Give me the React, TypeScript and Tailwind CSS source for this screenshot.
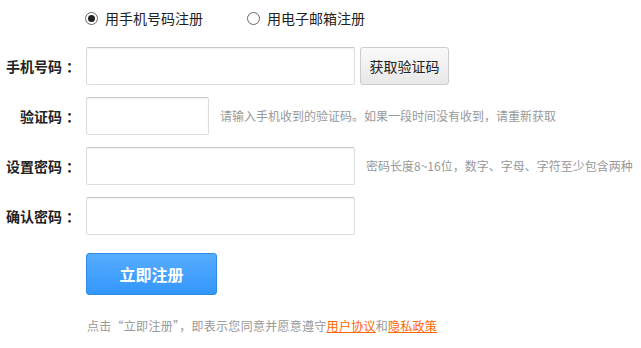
import React, { useState } from 'react';

const font = { fontFamily: '"Noto Sans CJK SC", "Noto Sans", sans-serif' };

function Radio({ checked, label, onClick }: { checked: boolean; label: string; onClick: () => void }) {
    return (
        <button type="button" onClick={onClick} className="flex items-center gap-[7px] text-[14px] text-[#222] leading-none">
            <span className="w-[13px] h-[13px] rounded-full border border-[#666] bg-white flex items-center justify-center">
                {checked && <span className="w-[7px] h-[7px] rounded-full bg-[#222]" />}
            </span>
            <span>{label}</span>
        </button>
    );
}

function Row({ label, children }: { label: string; children: React.ReactNode }) {
    return (
        <div className="flex items-center h-[38px]">
            <label className="w-[80px] text-right text-[14px] font-bold text-[#222] whitespace-nowrap">
                {label}<span className="ml-[4px]">：</span>
            </label>
            <div className="ml-[6px] flex items-center">{children}</div>
        </div>
    );
}

const inputCls = 'h-[38px] border border-[#ddd] border-t-[#c8c8c8] rounded-[2px] bg-white shadow-[inset_0_1px_2px_rgba(0,0,0,0.06)] outline-none px-2 text-[14px]';

export default function App() {
    const [mode, setMode] = useState('phone');

    return (
        <div className="w-[641px] h-[348px] bg-white pt-[8px]" style={font}>
            <div className="flex items-center h-[20px] pl-[85px] gap-[44px]">
                <Radio checked={mode === 'phone'} label="用手机号码注册" onClick={() => setMode('phone')} />
                <Radio checked={mode === 'email'} label="用电子邮箱注册" onClick={() => setMode('email')} />
            </div>

            <div className="mt-[19px] flex flex-col gap-[12px]">
                <Row label="手机号码">
                    <input className={`${inputCls} w-[269px]`} />
                    <button type="button" className="ml-[5px] w-[89px] h-[38px] border border-[#ccc] rounded-[3px] bg-gradient-to-b from-[#fafafa] to-[#e8e8e8] text-[14px] text-[#222]">
                        获取验证码
                    </button>
                </Row>
                <Row label="验证码">
                    <input className={`${inputCls} w-[123px]`} />
                    <span className="ml-[11px] text-[12px] text-[#999] whitespace-nowrap">请输入手机收到的验证码。如果一段时间没有收到，请重新获取</span>
                </Row>
                <Row label="设置密码">
                    <input type="password" className={`${inputCls} w-[269px]`} />
                    <span className="ml-[11px] text-[12px] text-[#999] whitespace-nowrap">密码长度8~16位，数字、字母、字符至少包含两种</span>
                </Row>
                <Row label="确认密码">
                    <input type="password" className={`${inputCls} w-[269px]`} />
                </Row>
            </div>

            <div className="pl-[87px] mt-[18px]">
                <button type="button" className="-ml-px w-[131px] h-[42px] rounded-[3px] border border-[#2e8be8] bg-gradient-to-b from-[#56acff] to-[#3297fb] text-white text-[16px] font-bold">
                    立即注册
                </button>
                <p className="mt-[25px] text-[12px] text-[#999] leading-none whitespace-nowrap tracking-[0.28px]">
                    点击“立即注册”，即表示您同意并愿意遵守<a className="text-[#ff6600] underline">用户协议</a>和<a className="text-[#ff6600] underline">隐私政策</a>
                </p>
            </div>
        </div>
    );
}
